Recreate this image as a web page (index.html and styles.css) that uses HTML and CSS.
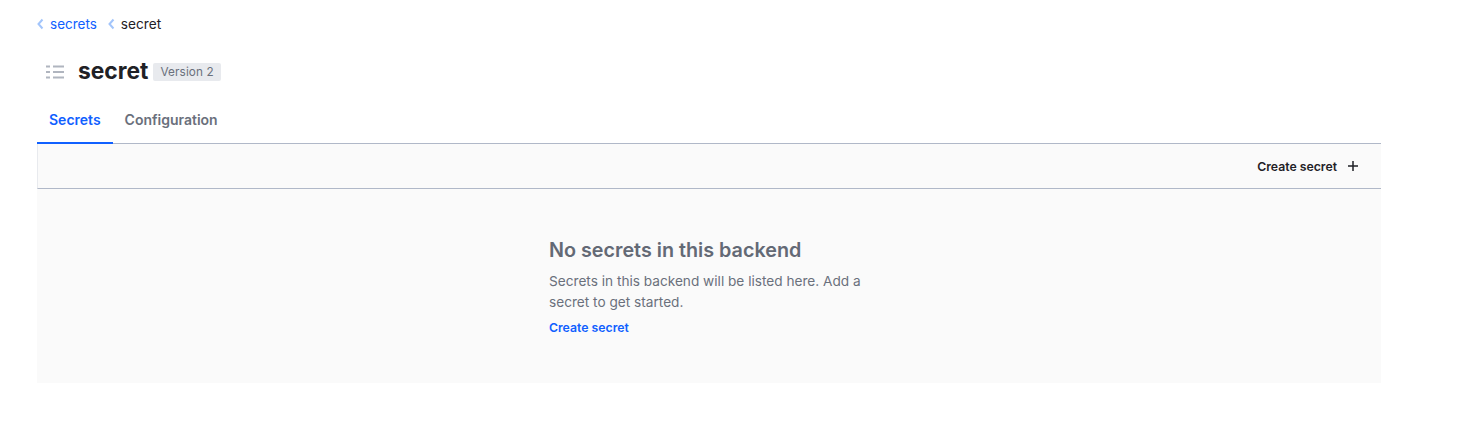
FILE: index.html
```html
<!DOCTYPE html>
<html lang="en">
<head>
<meta charset="utf-8">
<title>secret</title>
<link rel="stylesheet" href="styles.css">
</head>
<body>
<main class="page">
  <nav class="crumbs">
    <svg class="chev" viewBox="0 0 7 12"><path d="M5.500 1.500 1.500 6l4 4.500"/></svg>
    <a class="crumb-link">secrets</a>
    <svg class="chev chev-second" viewBox="0 0 7 12"><path d="M5.500 1.500 1.500 6l4 4.500"/></svg>
    <span class="crumb-current">secret</span>
  </nav>
  <header class="title-row">
    <svg class="list-icon" viewBox="0 0 20 14"><path d="M1 1.500h4M8 1.500h11M1 7h4M8 7h11M1 12.500h4M8 12.500h11"/></svg>
    <h1 class="title">secret</h1>
    <span class="badge">Version 2</span>
  </header>
  <div class="tabs">
    <a class="tab tab-active">Secrets</a>
    <a class="tab">Configuration</a>
  </div>
  <div class="toolbar">
    <a class="toolbar-action">Create secret
      <svg class="plus" viewBox="0 0 12 12"><path d="M6 1v10M1 6h10"/></svg>
    </a>
  </div>
  <section class="empty">
    <div class="empty-inner">
      <h2 class="empty-title">No secrets in this backend</h2>
      <p class="empty-text">Secrets in this backend will be listed here. Add a secret to get started.</p>
      <a class="empty-link">Create secret</a>
    </div>
  </section>
</main>
</body>
</html>
```
FILE: styles.css
```css
* { box-sizing: border-box; }
html, body { margin: 0; background: #fff; }
body { font-family: Inter, "Liberation Sans", sans-serif; color: #1f2126; overflow: hidden; }
.page { width: 1381px; padding: 0 0 0 37px; }
.crumbs { display: flex; align-items: center; height: 17px; margin-top: 15px; font-size: 13.500px; }
.chev { width: 7px; height: 12px; fill: none; stroke: #a3c5fb; stroke-width: 2; }
.chev-second { margin-left: 11px; }
.crumb-link { color: #1060ff; margin-left: 6px; }
.crumb-current { color: #1f2126; margin-left: 6px; font-size: 13.650px; }
.title-row { display: flex; align-items: center; height: 34px; margin-top: 22px; padding-left: 8px; }
.list-icon { width: 20px; height: 14px; margin-top: 2px; fill: none; stroke: #b0b5bf; stroke-width: 2; }
.title { margin: 0 0 0 13px; font-size: 22.800px; line-height: 34px; font-weight: 700; color: #1f2126; }
.badge { margin-left: 5px; height: 18px; margin-top: 2px; line-height: 18px; padding: 0 7px; border-radius: 2px; background: #e8eaee; color: #6a707c; font-size: 11.750px; letter-spacing: 0.01em; }
.tabs { display: flex; margin-top: 14px; height: 42px; }
.tab { padding: 0 12px; line-height: 36px; font-size: 14px; font-weight: 600; color: #6a707c; }
.tab-active { color: #1060ff; border-bottom: 2px solid #1060ff; height: 42px; }
.toolbar { display: flex; justify-content: flex-end; align-items: center; height: 46px; margin-top: -1px; background: #fafafa; border-top: 1px solid #b0b8c8; border-bottom: 1px solid #b0b8c8; border-left: 1px solid #e8eaee; padding-right: 22px; }
.toolbar-action { display: flex; align-items: center; gap: 10px; font-size: 12.250px; font-weight: 600; color: #1f2126; }
.plus { width: 12px; height: 12px; fill: none; stroke: #1f2126; stroke-width: 1.500; }
.empty { background: #fafafa; height: 194px; padding: 48px 0 0 512px; }
.empty-inner { width: 320px; }
.empty-title { margin: 0; font-size: 19.750px; line-height: 26px; font-weight: 600; color: #636975; }
.empty-text { margin: 8px 0 0; font-size: 13.650px; line-height: 21px; color: #6a707c; }
.empty-link { display: block; margin-top: 8px; font-size: 12.250px; line-height: 14px; font-weight: 600; color: #1060ff; }
```
